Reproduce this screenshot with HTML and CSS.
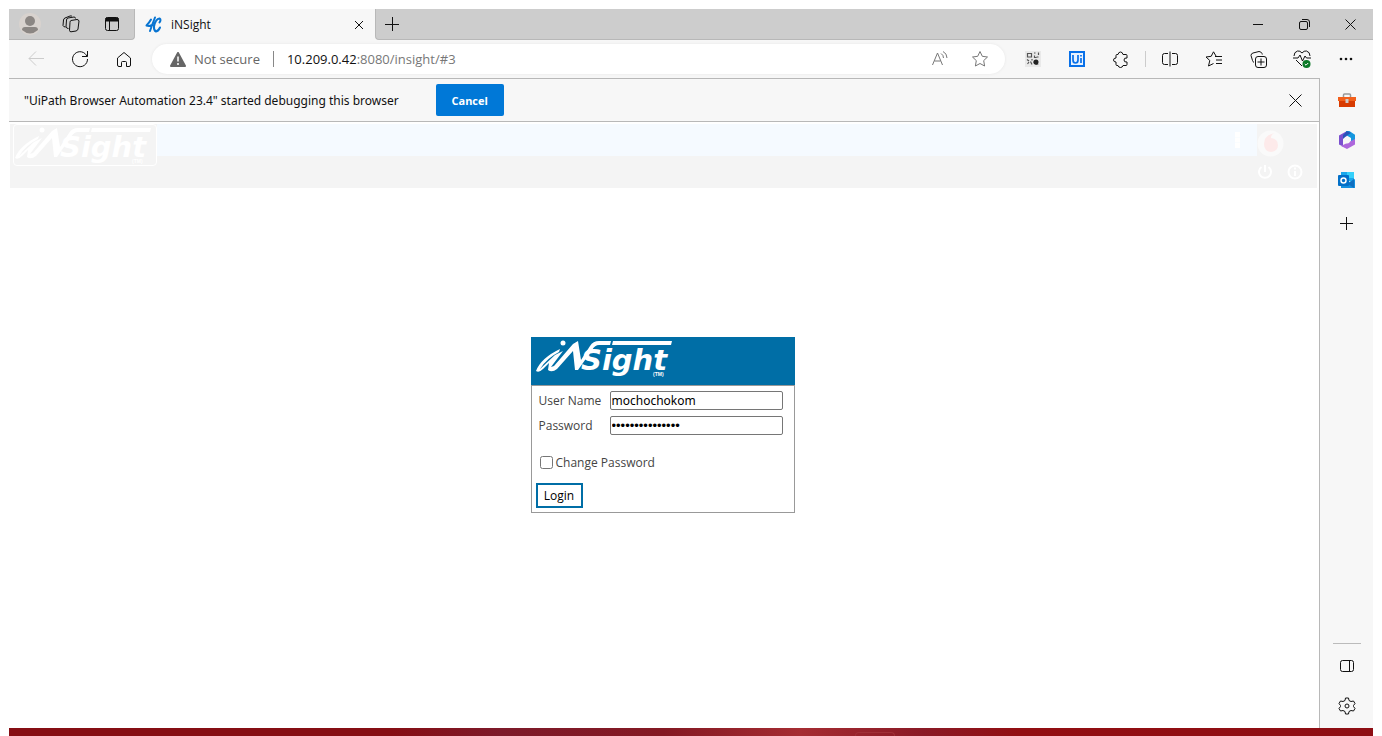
FILE: index.html
```html
<!DOCTYPE html>
<html lang="en">
<head>
<meta charset="utf-8">
<title>iNSight</title>
<link rel="stylesheet" href="styles.css">
</head>
<body>
<div class="window">
  <header class="tabs">
    <div class="tab-tools">
      <button class="tool profile" aria-label="Profile"><svg width="22" height="22" viewBox="0 0 22 22"><circle cx="11" cy="11" r="11" fill="#d8d2ce"/><circle cx="11" cy="8" r="5" fill="#8b8683"/><path d="M3 17q0-3 3-3h10q3 0 3 3-8 7-16 0" fill="#8b8683"/></svg></button>
      <button class="tool" aria-label="Workspaces"><svg class="line" width="18" height="18" viewBox="0 0 18 18"><path d="M9 5.500l6-1q1.500 0 2 1.500l-1 8q-.3 1.500-2 2l-5 .8q-1.500 0-1.500-1.500l.5-8q0-1.500 1-1.800zM6.500 13.500q-2 0-2.500-1.500l.5-7q0-1.500 1.500-2l6-1q1.500 0 1.500 1.500M3.500 12q-2 0-2.500-1.500L1.500 5q.2-1.500 1.500-2l5-2q1.500-.5 2 .5"/></svg></button>
      <button class="tool" aria-label="Tab actions"><svg class="line" width="16" height="16" viewBox="0 0 16 16"><rect x="1.500" y="1.500" width="13" height="13" rx="2"/><path d="M2 2h12v3H2z" fill="#111"/><path d="M5.500 5v9"/></svg></button>
    </div>
    <div class="tab">
      <svg width="18" height="18" viewBox="0 0 18 18" fill="none" stroke="#0874d1" stroke-width="2" stroke-linecap="round" stroke-linejoin="round"><path d="M6 3.500Q4 7 1.500 9.500q3 1 6-.5M10 1.500Q7 9 5 15M14.500 6.500q2-3 0-4-4 .5-5.500 8-.3 4 2 5 2.500-.5 4-4"/></svg>
      <span>iNSight</span>
      <button class="close" aria-label="Close tab"><svg class="line" width="10" height="10" viewBox="0 0 10 10"><path d="M1 1l8 8M9 1L1 9"/></svg></button>
    </div>
    <div class="tab-rest">
      <button class="new" aria-label="New tab"><svg class="line" width="14" height="14" viewBox="0 0 14 14"><path d="M7.500 0v14M0 7.500h14"/></svg></button>
      <div class="controls">
        <button aria-label="Minimize"><svg class="line" width="10" height="10" viewBox="0 0 10 10"><path d="M0 5.500h10"/></svg></button>
        <button aria-label="Restore"><svg class="line" width="11" height="11" viewBox="0 0 11 11"><rect x=".5" y="2.500" width="8" height="8" rx="1.500"/><path d="M3 .5h5q2.500 0 2.500 2.500v5"/></svg></button>
        <button aria-label="Close window"><svg class="line" width="11" height="11" viewBox="0 0 11 11"><path d="M.5.5l10 10M10.500.5l-10 10"/></svg></button>
      </div>
    </div>
  </header>

  <nav class="toolbar">
    <div class="group">
      <button class="tool" aria-label="Back"><svg class="line faint" width="16" height="16" viewBox="0 0 16 16"><path d="M16 7.500H1M8 .5l-7 7 7 7"/></svg></button>
      <button class="tool" aria-label="Refresh"><svg class="line" width="18" height="18" viewBox="0 0 18 18"><path d="M16 6.500A7.500 7.500 0 1 0 16.500 9M16.500 1v5.500h-5.500"/></svg></button>
      <button class="tool" aria-label="Home"><svg class="line" width="16" height="17" viewBox="0 0 16 17"><path d="M1.500 7L8 1.500 14.500 7v7q0 1.500-1.500 1.500h-2.500v-4q0-1-1-1h-3q-1 0-1 1v4H3q-1.500 0-1.500-1.500z"/></svg></button>
    </div>
    <div class="address">
      <svg width="16" height="15" viewBox="0 0 16 15"><path d="M8 1l7 13H1z" fill="#666" stroke="#666" stroke-width="2" stroke-linejoin="round"/><path d="M8 4.500v5M8 11v2" stroke="#fff" stroke-width="1.500"/></svg>
      <span class="secure">Not secure</span>
      <span class="url"><b>10.209.0.42</b>:8080/insight/#3</span>
      <button class="mini" aria-label="Read aloud"><svg class="line grey" width="16" height="16" viewBox="0 0 16 16"><path d="M.5 14L5.500 2l5 12M2.500 10h6M9 2.500q2.500 1.500 2.500 4.500M11 .5q4 2 4 6.500"/></svg></button>
      <button class="mini" aria-label="Add to favorites"><svg class="line grey" width="18" height="18" viewBox="0 0 18 18"><path d="M9 1.500l2.300 4.800 5.200.7-3.800 3.600.9 5.400L9 13.500 4.400 16l.9-5.400L1.500 7l5.200-.7z"/></svg></button>
    </div>
    <div class="group">
      <button class="tool" aria-label="QR code"><svg width="16" height="16" viewBox="0 0 16 16"><path d="M0 0h16v16H0z" fill="#e9e9e9"/><path d="M2.500 2.500h4v3.500h-4zM9 2h1.500M13.500 1.500v2.500M9.500 4.500v2h2M13.500 6h-2M2 8.500l2 1.500M2.500 13l1.500-2M5.500 10.500l1.500 3M7 8v1.500" fill="none" stroke="#555" stroke-width="1.200"/><path d="M9 9q0 4 5 4-4 2-5.500-1z" fill="#222"/><circle cx="11" cy="11" r="2.500" fill="#222"/></svg></button>
      <button class="tool" aria-label="UiPath"><svg width="16" height="16" viewBox="0 0 16 16"><path d="M1 1h14v14H1z" fill="#e8f2ff" stroke="#0870e8" stroke-width="2"/><path d="M4 4v5q0 3 2.500 3T9 9V4M12 7v5M12 4v1.500" fill="none" stroke="#0870e8" stroke-width="1.700"/></svg></button>
      <button class="tool" aria-label="Extensions"><svg class="line" width="16" height="17" viewBox="0 0 16 17"><path d="M5 3.500q.5-2.500 2.500-2.500T10 3.500h3q1 0 1 1v2.500q-3-.5-3 2t3 2v2.500q0 1-1 1h-3q-.5 2-2.500 2T5 14.500H4q-1 0-1-1V11Q.5 11 .5 9T3 7V4.500q0-1 1-1z"/></svg></button>
    </div>
    <div class="group last">
      <button class="tool" aria-label="Split screen"><svg class="line" width="16" height="16" viewBox="0 0 16 16"><path d="M6 2.500H2.500q-2 0-2 2v7q0 2 2 2H6M10 2.500h3.500q2 0 2 2v7q0 2-2 2H10M8 .5v15"/></svg></button>
      <button class="tool" aria-label="Favorites"><svg class="line" width="18" height="16" viewBox="0 0 18 16"><path d="M11 5L8.500.8 6.200 5.300 1 6l3.800 3.500L3.500 15 8.500 12.500M10 5.500h7M11 9h6M11 12.500h6"/></svg></button>
      <button class="tool" aria-label="Collections"><svg class="line" width="17" height="17" viewBox="0 0 17 17"><rect x="5.500" y="5.500" width="11" height="11" rx="2.500"/><path d="M11 7.500v7M7.500 11h7M4 11.500q-1-.5-1.500-2l-1.500-5q0-2 2-2.500l6-1.500q2 0 3 2l.3 1"/></svg></button>
      <button class="tool" aria-label="Browser essentials"><svg class="line" width="18" height="18" viewBox="0 0 18 18"><path d="M1 6q0-4 3.500-5Q7 .5 9 3q2-2.500 4.500-2Q17 2 17 6M0 8h5l2-3 2.500 6L12 6l1.500 2H18M3 10l6 6"/><circle cx="13.500" cy="14" r="4" fill="#0b7a28" stroke="none"/><path d="M11.800 14l1.200 1.200 2.200-2.200" stroke="#fff"/></svg></button>
      <button class="tool" aria-label="Settings and more"><svg width="14" height="4" viewBox="0 0 14 4" fill="#111"><circle cx="2" cy="2" r="1.300"/><circle cx="7" cy="2" r="1.300"/><circle cx="12" cy="2" r="1.300"/></svg></button>
    </div>
  </nav>

  <div class="body">
    <div class="view">
      <div class="notice">
        <span>"UiPath Browser Automation 23.4" started debugging this browser</span>
        <button class="cancel">Cancel</button>
        <button class="dismiss" aria-label="Dismiss"><svg class="line" width="13" height="13" viewBox="0 0 13 13"><path d="M.5.5l12 12M12.500.5l-12 12"/></svg></button>
      </div>
      <div class="page">
        <header class="app-head">
          <div class="app-logo">
            <svg class="logo" width="140" height="40" viewBox="0 0 140 40" fill="currentColor">
              <path d="M1 33Q6 20 25 11L24 14Q12 20 5 31L20 17 28 13 16 29 19 28 38 6 43 3 46 22 55 8Q58 3 64 3H76L75 7H64Q60 7 57 12L43 32H40L38 13 22 31Q17 35 13 32L14 25 8 31Q4 35 1 33Z"/>
              <circle cx="28" cy="5" r="2.500"/>
              <path d="M78 3H137L136 7H77Z"/>
              <text x="46" y="32" class="logo-word">Sight</text>
              <text x="118" y="38" class="logo-tm">(TM)</text>
            </svg>
          </div>
          <div class="app-strip"><svg width="5" height="16" viewBox="0 0 5 16" fill="#fff"><path d="M0 0h5v5H0zM0 5.500h5v5H0zM0 11h5v5H0z"/></svg></div>
          <div class="app-side">
            <svg width="27" height="27" viewBox="0 0 27 27"><circle cx="13.500" cy="13.500" r="13" fill="#fafafa"/><path d="M18 3q-4 1-4 5 7 1 7 7 0 6-7 7-7-1-7-8Q7 5 18 3" fill="#fdeaea"/></svg>
            <div class="app-actions">
              <svg width="16" height="16" viewBox="0 0 16 16" fill="none" stroke="#fff" stroke-width="2"><path d="M4.500 3a6 6 0 1 0 7 0M8 1v7"/></svg>
              <svg width="16" height="16" viewBox="0 0 16 16" fill="none" stroke="#fff" stroke-width="2"><circle cx="8" cy="8" r="6.500"/><path d="M8 3.500v2M8 7v5"/></svg>
            </div>
          </div>
        </header>
        <main class="stage">
          <form class="login">
            <div class="login-head">
              <svg class="logo" width="140" height="40" viewBox="0 0 140 40" fill="currentColor">
                <path d="M1 33Q6 20 25 11L24 14Q12 20 5 31L20 17 28 13 16 29 19 28 38 6 43 3 46 22 55 8Q58 3 64 3H76L75 7H64Q60 7 57 12L43 32H40L38 13 22 31Q17 35 13 32L14 25 8 31Q4 35 1 33Z"/>
                <circle cx="28" cy="5" r="2.500"/>
                <path d="M78 3H137L136 7H77Z"/>
                <text x="46" y="32" class="logo-word">Sight</text>
                <text x="118" y="38" class="logo-tm">(TM)</text>
              </svg>
            </div>
            <div class="login-body">
              <div class="fields">
                <label for="user">User Name</label><input id="user" type="text" value="mochochokom">
                <label for="pass">Password</label><input id="pass" type="password" value="123456789012345">
              </div>
              <div class="change"><input id="change" type="checkbox"><label for="change">Change Password</label></div>
              <button class="submit" type="button">Login</button>
            </div>
          </form>
        </main>
      </div>
    </div>
    <aside class="sidebar">
      <button aria-label="Tools"><svg width="18" height="14" viewBox="0 0 18 14"><path d="M5.500 4V2q0-1 1-1h5q1 0 1 1v2" fill="none" stroke="#999" stroke-width="1.500"/><path d="M0 4h18v4H0z" fill="#f2601c"/><path d="M1 8h16v6H1z" fill="#d83b01"/><path d="M7.500 6h3v4h-3z" fill="#ccc"/></svg></button>
      <button aria-label="Microsoft 365"><svg width="18" height="18" viewBox="0 0 18 18"><path d="M9 0L1 4.500v9l4 2V7l6-3V0z" fill="#7b50cf"/><path d="M8 0l3-.2 6 4V12l-4-1V7L8 4z" fill="#1597df"/><path d="M17 8v5.500L9 18l-6-3 6-3 4-2z" fill="#ad67dc"/><path d="M5 4l4-4 4 2-5 3-3 3z" fill="#2754b8"/><circle cx="9" cy="9.500" r="3" fill="#f7f7f7"/></svg></button>
      <button aria-label="Outlook"><svg width="17" height="17" viewBox="0 0 17 17"><path d="M3 0h13v9H3z" fill="#1aa8ec"/><path d="M3 8l6 3 8-4v9H3z" fill="#1490df"/><path d="M9 0h7v6H9z" fill="#35d0fa"/><path d="M16 7v9l-6-4z" fill="#0f6fc0"/><rect y="3" width="11" height="11" rx="1" fill="#0370c8"/><circle cx="5.500" cy="8.500" r="2.500" fill="none" stroke="#fff" stroke-width="1.500"/></svg></button>
      <button class="add" aria-label="Add"><svg class="line" width="13" height="13" viewBox="0 0 13 13"><path d="M6.500 0v13M0 6.500h13"/></svg></button>
      <div class="side-end">
        <button aria-label="Hide sidebar"><svg class="line" width="14" height="12" viewBox="0 0 14 12"><rect x=".5" y=".5" width="13" height="11" rx="2"/><path d="M9.500 1v10"/></svg></button>
        <button aria-label="Settings"><svg class="line" width="18" height="18" viewBox="0 0 18 18"><path d="M7 3.500L7.500 1h3l.5 2.500 2 1L15.500 4 17 6.500 15.500 8.500v1L17 11.500 15.500 14l-2.500-.5-2 1-.5 2.500h-3L7 14.500l-2-1-2.500.5L1 11.500l1.500-2v-1L1 6.500 2.500 4l2.500.5z" stroke-linejoin="round"/><circle cx="9" cy="9" r="2"/></svg></button>
      </div>
    </aside>
  </div>
  <footer class="desktop"><span></span></footer>
</div>
</body>
</html>
```

FILE: styles.css
```css
* { box-sizing: border-box; }
body {
  margin: 0;
  background: #fff;
  font-family: "Open Sans", "Noto Sans", sans-serif;
  font-size: 12px;
  color: #111;
}
button {
  display: flex;
  align-items: center;
  justify-content: center;
  padding: 0;
  border: 0;
  background: none;
  font: inherit;
  color: inherit;
}
svg { display: block; flex: none; }
.line { fill: none; stroke: #111; stroke-width: 1; }
.line.faint { stroke: #ccc; }
.line.grey { stroke: #777; }
.logo { overflow: visible; }
.logo-word { font: italic bold 29px "DejaVu Sans", sans-serif; }
.logo-tm { font: bold 5px "Liberation Sans", sans-serif; }

.window {
  display: flex;
  flex-direction: column;
  min-height: 100vh;
  padding: 9px 9px 0;
}

.tabs { display: flex; height: 31px; background: #f7f7f7; }
.tab-tools, .tab-rest {
  display: flex;
  align-items: center;
  background: #cdcdcd;
  border-bottom: 1px solid #b8b8b8;
}
.tab-tools { width: 126px; border-right: 1px solid #b8b8b8; border-bottom-right-radius: 4px; }
.tab-rest { flex: 1; border-left: 1px solid #b8b8b8; border-bottom-left-radius: 4px; }
.tab { display: flex; align-items: center; gap: 8px; width: 240px; padding: 0 10px; }
.tab span { flex: 1; }
.close { width: 12px; height: 20px; }
.new { width: 32px; height: 28px; }
.controls { display: flex; margin-left: auto; }
.controls button { width: 46px; height: 30px; }

.toolbar {
  display: flex;
  align-items: center;
  height: 38px;
  padding: 0 5px;
  background: #f7f7f7;
}
.group { display: flex; align-items: center; }
.tool { width: 44px; height: 28px; }
.tab-tools .tool { width: 41px; }
.last { margin-left: 2px; padding-left: 3px; background: linear-gradient(#ccc, #ccc) left center / 1px 16px no-repeat; }
.address {
  display: flex;
  align-items: center;
  flex: 1;
  height: 30px;
  margin: 0 6px;
  padding: 0 5px 0 18px;
  border-radius: 15px;
  background: #fff;
  box-shadow: 0 0 3px #e6e6e6;
  font-size: 13px;
  color: #777;
}
.secure { margin-left: 8px; padding-right: 13px; border-right: 1px solid #888; line-height: 16px; color: #666; }
.url { flex: 1; margin-left: 13px; }
.url b { font-weight: 400; color: #111; }
.mini { width: 40px; height: 28px; }

.body { display: flex; flex: 1; }
.view { display: flex; flex-direction: column; flex: 1; border-top: 1px solid #b8b8b8; border-right: 1px solid #b8b8b8; }
.notice {
  display: flex;
  align-items: center;
  height: 43px;
  padding: 0 10px 0 15px;
  border-bottom: 1px solid #b8b8b8;
  background: #f7f7f7;
  font-family: "Noto Sans", sans-serif;
}
.cancel {
  width: 68px;
  height: 32px;
  margin-left: 37px;
  border-radius: 2px;
  background: #0078d7;
  color: #fff;
  font: 700 11px "Open Sans", sans-serif;
}
.dismiss { width: 28px; height: 28px; margin-left: auto; }

.page { display: flex; flex-direction: column; flex: 1; padding: 2px 2px 0 1px; background: #fff; }
.app-head { display: flex; height: 64px; background: #f4f4f4; color: #fff; }
.app-logo { width: 144px; height: 42px; margin-left: 3px; border: 1px solid #fff; border-radius: 4px; }
.app-strip {
  display: flex;
  align-items: center;
  justify-content: flex-end;
  flex: 1;
  height: 32px;
  padding-right: 17px;
  background: #f5faff;
}
.app-side { width: 60px; padding-top: 6px; }
.app-actions { display: flex; gap: 14px; padding-top: 7px; }

.stage { display: flex; flex: 1; align-items: center; justify-content: center; padding: 0 2px 66px 0; }
.login { width: 264px; border: 1px solid #999; border-top: 0; font-size: 12px; color: #444; }
.login-head { height: 49px; margin: 0 -1px; padding: 1px 4px; border-bottom: 1px solid #999; background: #006ea6; color: #fff; }
.login-body { padding: 5px 4px 4px; }
.fields { display: grid; grid-template-columns: 71px 173px; gap: 6px 0; align-items: center; padding-left: 3px; }
.fields input {
  height: 19px;
  padding: 0 1px;
  border: 1px solid #767676;
  border-radius: 2px;
  background: #fff;
  color: #000;
  font: 12px/17px "Noto Sans", sans-serif;
}
.fields #pass { font: 13px/17px "Liberation Sans", sans-serif; }
.change { display: flex; align-items: center; gap: 3px; height: 20px; margin: 17px 0 11px 4px; }
.change input { width: 13px; height: 13px; margin: 0; }
.submit { width: 47px; height: 25px; border: 2px solid #006ea6; background: #fff; color: #000; }

.sidebar {
  display: flex;
  flex-direction: column;
  align-items: center;
  width: 53px;
  padding: 2px 0 2px;
  background: #f7f7f7;
}
.sidebar button { width: 40px; height: 40px; }
.sidebar .add { margin-top: 3px; }
.side-end {
  margin-top: auto;
  padding: 3px 0 0;
  background: linear-gradient(#bbb, #bbb) center top / 28px 1px no-repeat;
}
.desktop {
  display: flex;
  height: 8px;
  background: linear-gradient(90deg, #860e14 0%, #860e14 28%, #7d1a2a 36%, #841923 48%, #a52c32 58%, #8a1a26 67%, #920e12 74%, #8e0e14 100%);
}
.desktop span { width: 40px; margin: 4px 0 0 62%; border: 1px solid #a03038; border-bottom: 0; border-radius: 4px 4px 0 0; }
```
